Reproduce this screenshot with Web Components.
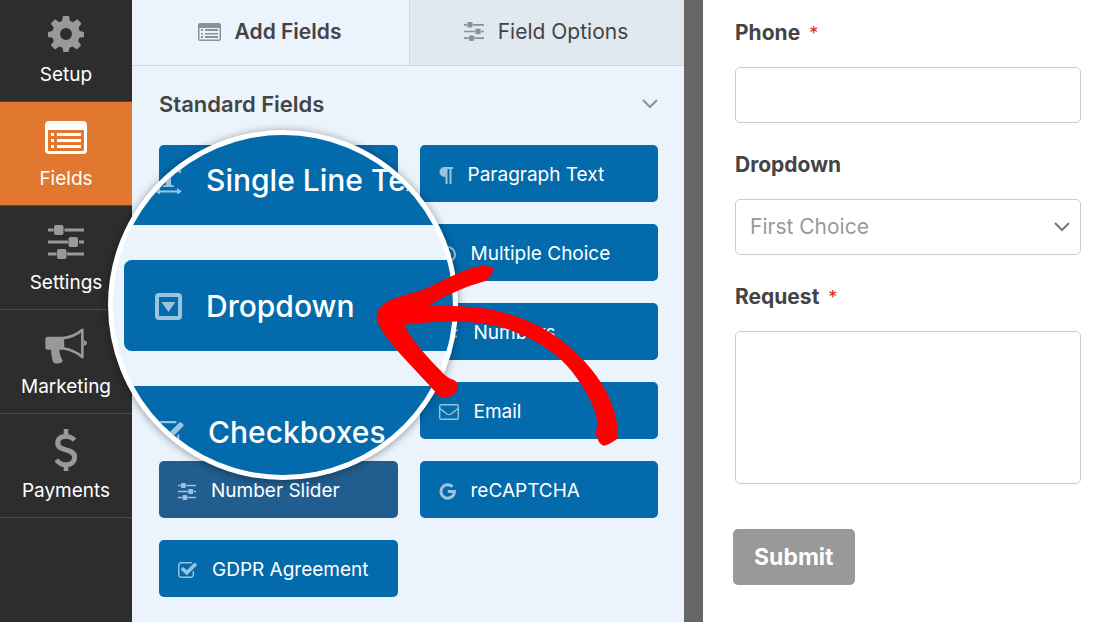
<!DOCTYPE html>
<html lang="en">
<head>
<meta charset="UTF-8">
<meta name="viewport" content="width=device-width, initial-scale=1">
<title>Form Builder</title>
<style>
  body {
    margin: 0;
    font-family: Inter, "Liberation Sans", sans-serif;
    color: #444;
    overflow: hidden;
  }
</style>
</head>
<body>
<form-builder>
  <side-nav slot="nav">
    <nav-item icon="gear">Setup</nav-item>
    <nav-item icon="list" active>Fields</nav-item>
    <nav-item icon="sliders">Settings</nav-item>
    <nav-item icon="bullhorn">Marketing</nav-item>
    <nav-item icon="dollar">Payments</nav-item>
  </side-nav>

  <field-panel slot="panel">
    <panel-tab slot="tabs" icon="listSmall" active>Add Fields</panel-tab>
    <panel-tab slot="tabs" icon="sliders">Field Options</panel-tab>
    <span slot="title">Standard Fields</span>

    <field-button label="Single Line Text"></field-button>
    <field-button icon="paragraph">Paragraph Text</field-button>
    <field-button class="right" icon="radio">Multiple Choice</field-button>
    <field-button class="right" icon="hash">Numbers</field-button>
    <field-button class="right" icon="envelope">Email</field-button>
    <field-button icon="sliders" active>Number Slider</field-button>
    <field-button icon="google">reCAPTCHA</field-button>
    <field-button icon="check">GDPR Agreement</field-button>

    <zoom-lens slot="overlay">
      <field-button icon="text">Single Line Text</field-button>
      <field-button icon="caret">Dropdown</field-button>
      <field-button icon="check">Checkboxes</field-button>
    </zoom-lens>
    <pointer-arrow slot="overlay"></pointer-arrow>
  </field-panel>

  <form-preview slot="preview">
    <form-field type="text" label="Phone" required></form-field>
    <form-field type="select" label="Dropdown" value="First Choice"></form-field>
    <form-field type="textarea" label="Request" required></form-field>
  </form-preview>
</form-builder>

<script>
// width, height, viewBox and markup of every icon
const ICONS = {
  gear: [36, 36, "0 0 36 36", `
    <path fill-rule="evenodd" d="M15 0h6l1 5 3 1.300 4.300-3 4.200 4.200-3 4.300L31.700 15l4.300 1v5l-4.600.8-1.300 3.200 3 4.300-4.200 4.200-4.300-3L21.500 31.700l-.9 4.300h-5.200l-.9-4.300-3.200-1.200-4.300 3-4.200-4.200 3-4.300L4.600 21.800 0 21v-5l4.300-1 1.500-3.200-3-4.300L7 3.300l4.300 3L14 5zM18 12a6 6 0 1 0 0 12 6 6 0 0 0 0-12z"/>`],
  list: [42, 33, "0 0 42 33", `
    <path fill-rule="evenodd" d="M4 0h34a4 4 0 0 1 4 4v25a4 4 0 0 1-4 4H4a4 4 0 0 1-4-4V4a4 4 0 0 1 4-4zM3 9v20q0 1 1 1h34q1 0 1-1V9z"/>
    <path d="M6 12h3v3H6zM12 12h24v3H12zM6 18h3v3H6zM12 18h24v3H12zM6 24h3v3H6zM12 24h24v3H12z"/>`],
  listSmall: [23, 18, "0 0 23 18", `
    <path fill-rule="evenodd" d="M2 0h19a2 2 0 0 1 2 2v14a2 2 0 0 1-2 2H2a2 2 0 0 1-2-2V2a2 2 0 0 1 2-2zM1.500 5v11.500h20V5z"/>
    <path d="M3 6h2v2H3zM7 6h13v2H7zM3 10h2v1.500H3zM7 10h13v1.500H7zM3 13h2v2H3zM7 13h13v2H7z"/>`],
  sliders: [36, 34, "0 0 36 34", `
    <path d="M0 3.500h5.500v3H0zM16.500 3.500H36v3H16.500zM0 15.500h20v3H0zM31 15.500h5v3h-5zM0 27.500h8.500v3H0zM19 27.500h17v3H19z"/>
    <rect x="6" y="0" width="9.500" height="10" rx="2"/>
    <rect x="20.500" y="12" width="9.500" height="10" rx="2"/>
    <rect x="9" y="24" width="9.500" height="10" rx="2"/>`],
  bullhorn: [42, 36, "134 85 127 108", `
    <path d="M143 111h46v39h-46q-8 0-8-8v-23q0-8 8-8z"/>
    <path d="M152 148h25q1 13 4 21 2 8 7 14-2 9-16 9-12 0-15-8-4-16-5-36z"/>
    <path d="M188 115q35-3 59-25v83q-24-22-59-27z" fill="none" stroke="currentColor" stroke-width="8" stroke-linejoin="round"/>
    <path d="M252 121q9 3 9 9t-9 9z"/>`],
  dollar: [22, 42, "165 387 66 127", `
    <path d="M198 387v22M198 492v22" fill="none" stroke="currentColor" stroke-width="14"/>
    <path d="M224 421C211 406 173 402 173 430C173 456 224 444 224 472C224 502 181 501 169 480" fill="none" stroke="currentColor" stroke-width="15"/>`],
  text: [27, 27, "0 0 27 27", `
    <path d="M1 0h25v6h-2l-1-3h-7v15l3 .5V20H8v-1.500l3-.5V3H4L3 6H1z"/>
    <path d="M5 23.500h17V21l5 3.500-5 3V25.500H5v2l-5-3L5 21z"/>`],
  caret: [27, 27, "0 0 27 27", `
    <path fill-rule="evenodd" d="M4 0h19a4 4 0 0 1 4 4v19a4 4 0 0 1-4 4H4a4 4 0 0 1-4-4V4a4 4 0 0 1 4-4zM4 4v19h19V4zM6.500 9h14L13.500 19z"/>`],
  check: [19, 16, "64 128 1664 1408", `
    <path d="M1472 930v318q0 119-84.500 203.500T1184 1536H352q-119 0-203.500-84.500T64 1248V416q0-119 84.500-203.500T352 128h832q63 0 117 25 15 7 18 23 3 17-9 29l-49 49q-10 10-23 10-3 0-9-2-23-6-45-6H352q-66 0-113 47t-47 113v832q0 66 47 113t113 47h832q66 0 113-47t47-113V994q0-13 9-22l64-64q10-10 23-10 6 0 12 3 20 8 20 29zm231-489l-814 814q-24 24-57 24t-57-24L345 825q-24-24-24-57t24-57l110-110q24-24 57-24t57 24l263 263 647-647q24-24 57-24t57 24l110 110q24 24 24 57t-24 57z"/>`],
  paragraph: [14, 17, "0 0 14 17", `
    <path d="M5.500 0H14v2h-1.500v15h-2V2H8.500v15h-2V10H5.500a5 5 0 0 1 0-10z"/>`],
  radio: [17, 17, "0 0 17 17", `
    <circle cx="8.500" cy="8.500" r="7.500" fill="none" stroke="currentColor" stroke-width="2"/>
    <circle cx="8.500" cy="8.500" r="3.500"/>`],
  hash: [20, 17, "0 0 20 17", `
    <path d="M7.500 0L4.500 17M15.500 0l-3 17M2 5.500h17M1 11.500h17" fill="none" stroke="currentColor" stroke-width="2.200"/>`],
  envelope: [20, 16, "0 0 20 16", `
    <rect x=".7" y=".7" width="18.600" height="14.600" rx="1.500" fill="none" stroke="currentColor" stroke-width="1.400"/>
    <path d="M1 4.500q3 2.500 7 5.500 2 1.300 4 0 4-3 7-5.500" fill="none" stroke="currentColor" stroke-width="1.400"/>`],
  google: [17, 17, "0 0 17 17", `
    <path d="M13.500 3.800A6.700 6.700 0 1 0 15.400 8.500H8.700" fill="none" stroke="currentColor" stroke-width="3"/>`],
  chevron: [16, 10, "0 0 16 10", `
    <path d="M1 1l7 7 7-7" fill="none" stroke="currentColor" stroke-width="2"/>`]
};

// Inline svg for one icon, drawn at its own size times the scale
function icon(name, scale = 1) {
  if (!ICONS[name]) return "";
  const [w, h, box, body] = ICONS[name];
  return `<svg width="${Math.round(w * scale)}" height="${Math.round(h * scale)}" viewBox="${box}" fill="currentColor" aria-hidden="true">${body}</svg>`;
}

class BaseElement extends HTMLElement {
  constructor() {
    super();
    this.attachShadow({ mode: "open" });
  }

  connectedCallback() {
    this.shadowRoot.innerHTML = this.template();
  }
}

class FormBuilder extends BaseElement {
  template() {
    return `
      <style>
        :host {
          display: grid;
          grid-template-columns: 132px 552px 19px minmax(0, 1fr);
          min-height: 100vh;
        }
        .gutter {
          background: #666;
        }
      </style>
      <slot name="nav"></slot>
      <slot name="panel"></slot>
      <div class="gutter"></div>
      <slot name="preview"></slot>
    `;
  }
}

class SideNav extends BaseElement {
  template() {
    return `
      <style>
        :host {
          display: block;
          background: #2d2d2d;
        }
        nav {
          display: flex;
          flex-direction: column;
          /* the list is scrolled a little */
          margin-top: -2px;
        }
      </style>
      <nav><slot></slot></nav>
    `;
  }
}

class NavItem extends BaseElement {
  template() {
    return `
      <style>
        :host {
          display: block;
          border-bottom: 1px solid #4c4c4c;
        }
        button {
          display: grid;
          grid-template-rows: 42px 24px;
          gap: 8px;
          place-items: center;
          align-content: center;
          width: 100%;
          height: 103px;
          margin: 0;
          padding: 0;
          border: 0;
          background: none;
          color: #fff;
          font: 400 19px/24px Inter, "Liberation Sans", sans-serif;
          cursor: pointer;
        }
        svg {
          color: #999;
        }
        :host([active]) button {
          background: #e27730;
        }
        :host([active]) svg {
          color: #fff;
        }
      </style>
      <button type="button">${icon(this.getAttribute("icon"))}<span><slot></slot></span></button>
    `;
  }
}

class FieldPanel extends BaseElement {
  template() {
    return `
      <style>
        :host {
          display: block;
          position: relative;
          z-index: 1;
          background: #ebf3fc;
        }
        .tabs {
          display: grid;
          grid-template-columns: 278px 1fr;
          border-bottom: 1px solid #ced7e0;
        }
        .heading {
          display: flex;
          align-items: center;
          justify-content: space-between;
          padding: 24px 26px 27px 27px;
          color: #86919c;
        }
        h2 {
          margin: 0;
          color: #444;
          font-size: 22px;
          line-height: 28px;
          font-weight: 600;
        }
        .grid {
          display: grid;
          grid-template-columns: 1fr 1fr;
          gap: 22px;
          padding: 0 26px 24px 27px;
        }
        ::slotted(.right) {
          grid-column: 2;
        }
        /* starts a new row below the three covered ones */
        ::slotted(field-button[active]) {
          grid-column: 1;
        }
      </style>
      <div class="tabs" role="tablist"><slot name="tabs"></slot></div>
      <div class="heading"><h2><slot name="title"></slot></h2>${icon("chevron")}</div>
      <div class="grid"><slot></slot></div>
      <slot name="overlay"></slot>
    `;
  }
}

class PanelTab extends BaseElement {
  template() {
    const name = this.getAttribute("icon");
    return `
      <style>
        :host {
          display: block;
        }
        button {
          display: flex;
          align-items: center;
          justify-content: center;
          gap: 14px;
          width: 100%;
          height: 65px;
          margin: 0;
          padding: 0 2px 2px 0;
          border: 0;
          background: #e0e8f0;
          color: #444;
          font: 400 21px/28px Inter, "Liberation Sans", sans-serif;
          cursor: pointer;
        }
        :host([active]) button {
          border-right: 1px solid #ced7e0;
          background: #ebf3fc;
          font-weight: 600;
        }
        svg {
          color: #86919c;
        }
      </style>
      <button type="button" role="tab" aria-selected="${this.hasAttribute("active")}">${icon(name, name === "sliders" ? 0.55 : 1)}<span><slot></slot></span></button>
    `;
  }
}

class FieldButton extends BaseElement {
  template() {
    const name = this.getAttribute("icon");
    const label = this.getAttribute("label");
    const large = this.closest("zoom-lens") !== null;
    let scale = name === "sliders" ? 0.5 : 1;
    if (large && name === "check") scale = 1.5;
    return `
      <style>
        :host {
          display: block;
        }
        button {
          display: flex;
          align-items: center;
          gap: var(--button-gap, 15px);
          width: 100%;
          height: var(--button-height, 57px);
          margin: 0;
          padding: 3px 0 0 var(--button-padding, 19px);
          border: 0;
          border-radius: var(--button-radius, 5px);
          background: #036aab;
          color: #fff;
          font: var(--button-weight, 400) var(--button-font, 19px)/1.5 Inter, "Liberation Sans", sans-serif;
          white-space: nowrap;
          cursor: pointer;
        }
        :host([active]) button {
          background: #215d8f;
        }
        svg {
          flex: none;
          color: #9ac3dd;
        }
      </style>
      <button type="button"${label ? ` aria-label="${label}"` : ""}>${icon(name, scale)}<span><slot></slot></span></button>
    `;
  }
}

// Round magnifier that floats over the left column of buttons
class ZoomLens extends BaseElement {
  template() {
    return `
      <style>
        :host {
          --button-gap: 24px;
          --button-height: 91px;
          --button-padding: 31px;
          --button-radius: 8px;
          --button-font: 30px;
          --button-weight: 500;
          position: absolute;
          left: -24px;
          top: 130px;
          box-sizing: border-box;
          width: 350px;
          height: 350px;
          display: flex;
          flex-direction: column;
          justify-content: center;
          gap: 35px;
          padding-left: 11px;
          border: 5px solid #fff;
          border-radius: 50%;
          background: #ebf3fc;
          box-shadow: 0 1px 8px rgba(0, 0, 0, 0.4);
          overflow: hidden;
        }
        ::slotted(field-button) {
          flex: none;
          width: 382px;
        }
      </style>
      <slot></slot>
    `;
  }
}

class PointerArrow extends BaseElement {
  template() {
    return `
      <style>
        :host {
          position: absolute;
          left: 244px;
          top: 264px;
          pointer-events: none;
        }
        svg {
          display: block;
        }
      </style>
      <svg width="242" height="183" viewBox="48 72 726 549" fill="#f00" aria-hidden="true">
        <path d="M362 78Q392 77 402 84Q402 96 379 122C320 138 260 164 203 198C300 194 390 203 445 222C540 250 610 296 672 362C730 425 762 490 771 550L772 596Q748 614 730 617Q714 610 708 582L712 545C706 505 680 450 634 392C590 338 530 300 450 270C360 238 240 240 132 255C158 303 200 350 240 390Q262 416 282 420Q296 428 294 442Q288 466 262 472Q246 475 238 470C190 412 130 356 92 308C66 274 50 250 50 228C52 206 66 192 92 180C130 164 170 158 206 142C260 116 310 88 362 78Z"/>
      </svg>
    `;
  }
}

class FormPreview extends BaseElement {
  template() {
    return `
      <style>
        :host {
          display: block;
          background: #fff;
        }
        form {
          padding: 19px 33px 38px 30px;
        }
        .fields {
          display: flex;
          flex-direction: column;
          gap: 28px;
          padding: 0 2px;
        }
        button {
          margin: 45px 0 0;
          padding: 14px 21px;
          border: 0;
          border-radius: 5px;
          background: #999;
          color: #fff;
          font: 700 23px/28px Inter, "Liberation Sans", sans-serif;
          cursor: pointer;
        }
      </style>
      <form>
        <div class="fields"><slot></slot></div>
        <button type="button">Submit</button>
      </form>
    `;
  }
}

class FormField extends BaseElement {
  control() {
    switch (this.getAttribute("type")) {
      case "select":
        return `<div class="select"><select id="control"><option>${this.getAttribute("value")}</option></select>${icon("chevron")}</div>`;
      case "textarea":
        return `<textarea id="control"></textarea>`;
      default:
        return `<input id="control" type="text">`;
    }
  }

  template() {
    const mark = this.hasAttribute("required") ? `<span class="required">*</span>` : "";
    return `
      <style>
        :host {
          display: flex;
          flex-direction: column;
          gap: 20px;
        }
        label {
          font-size: 21px;
          line-height: 28px;
          font-weight: 700;
        }
        .required {
          margin-left: 9px;
          color: #d6301a;
          font-size: 18px;
          line-height: 20px;
          font-weight: 400;
        }
        input, select, textarea {
          display: block;
          box-sizing: border-box;
          width: 100%;
          height: 56px;
          margin: 0;
          padding: 0 14px;
          border: 1px solid #ccc;
          border-radius: 5px;
          background: #fff;
          color: #999;
          font: 400 21px/28px Inter, "Liberation Sans", sans-serif;
          appearance: none;
        }
        textarea {
          height: 153px;
          padding: 12px 14px;
          resize: none;
        }
        .select {
          display: grid;
          align-items: center;
        }
        .select > * {
          grid-area: 1 / 1;
        }
        .select svg {
          justify-self: end;
          margin-right: 11px;
          color: #777;
          pointer-events: none;
        }
      </style>
      <label for="control">${this.getAttribute("label")}${mark}</label>
      ${this.control()}
    `;
  }
}

customElements.define("form-builder", FormBuilder);
customElements.define("side-nav", SideNav);
customElements.define("nav-item", NavItem);
customElements.define("field-panel", FieldPanel);
customElements.define("panel-tab", PanelTab);
customElements.define("field-button", FieldButton);
customElements.define("zoom-lens", ZoomLens);
customElements.define("pointer-arrow", PointerArrow);
customElements.define("form-preview", FormPreview);
customElements.define("form-field", FormField);
</script>
</body>
</html>
